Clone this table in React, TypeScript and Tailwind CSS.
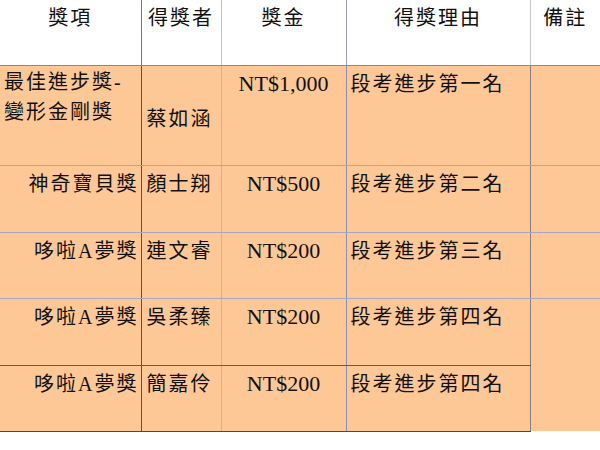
import React from "react";

const cjk = { fontFamily: '"Liberation Serif", "Noto Sans CJK TC", serif' };

type Row = {
  award: string;
  winner: string;
  prize: string;
  reason: string;
  h: string;
};

const rows: Row[] = [
  { award: "", winner: "蔡如涵", prize: "NT$1,000", reason: "段考進步第一名", h: "h-[100px]" },
  { award: "神奇寶貝獎", winner: "顏士翔", prize: "NT$500", reason: "段考進步第二名", h: "h-[67px]" },
  { award: "哆啦A夢獎", winner: "連文睿", prize: "NT$200", reason: "段考進步第三名", h: "h-[66px]" },
  { award: "哆啦A夢獎", winner: "吳柔臻", prize: "NT$200", reason: "段考進步第四名", h: "h-[67px]" },
  { award: "哆啦A夢獎", winner: "簡嘉伶", prize: "NT$200", reason: "段考進步第四名", h: "h-[66px]" },
];

export default function App() {
  const cell = "p-0 text-[20px] leading-[28px] tracking-[2px] text-[#111]";
  return (
    <div className="w-[600px] h-[450px] bg-white overflow-hidden" style={cjk}>
      <table className="table-fixed border-collapse w-[600px]">
        <colgroup>
          <col className="w-[141px]" />
          <col className="w-[80px]" />
          <col className="w-[125px]" />
          <col className="w-[184px]" />
          <col className="w-[70px]" />
        </colgroup>
        <thead>
          <tr className="h-[65px] bg-white">
            <th className={`${cell} align-top font-normal text-center pt-[4px] border-r border-r-[#777] border-b border-b-[#8a8a8a]`}>獎項</th>
            <th className={`${cell} align-top font-normal text-center pt-[4px] border-r border-r-[#c4c4c4] border-b border-b-[#8a8a8a]`}>得獎者</th>
            <th className={`${cell} align-top font-normal text-center pt-[4px] border-r border-r-[#9a9ab8] border-b border-b-[#8a8a8a]`}>獎金</th>
            <th className={`${cell} align-top font-normal text-center pt-[4px] border-r border-r-[#c8c8c8] border-b border-b-[#8a8a8a]`}>得獎理由</th>
            <th className={`${cell} align-top font-normal text-center pt-[4px] border-b border-b-[#8a8a8a]`}>備註</th>
          </tr>
        </thead>
        <tbody className="bg-[#fdc895]">
          {rows.map((r, i) => {
            const last = i === rows.length - 1;
            const bottom = last
              ? "border-b border-b-[#5a4636]"
              : i === 3
              ? "border-b border-b-[#6e5a48]"
              : "border-b border-b-[#a9a6c2]";
            return (
              <tr key={i} className={r.h}>
                <td
                  className={`${cell} align-top ${i === 0 ? "text-left pl-[4px] pt-[1px] leading-[30px]" : "text-right pr-[2px] pt-[4px]"} border-r border-r-[#5e5048] ${bottom}`}
                >
                  {i === 0 ? (
                    <>
                      <div>最佳進步獎-</div>
                      <div>變形金剛獎</div>
                    </>
                  ) : (
                    r.award
                  )}
                </td>
                <td
                  className={`${cell} ${i === 0 ? "align-middle pt-[8px]" : "align-top pt-[4px]"} pl-[5px] border-r border-r-[#c9b49c] ${bottom}`}
                >
                  {r.winner}
                </td>
                <td
                  className={`${cell} align-top text-center pt-[4px] text-[22px] tracking-normal border-r border-r-[#8e8eb0] ${bottom}`}
                >
                  {r.prize}
                </td>
                <td className={`${cell} align-top pl-[4px] pt-[4px] border-r border-r-[#8e7a78] ${bottom}`}>
                  {r.reason}
                </td>
                {i < 3 && (
                  <td className={`${cell} border-b border-b-[#a9a6c2]`}></td>
                )}
                {i === 3 && <td rowSpan={2} className={`${cell}`}></td>}
              </tr>
            );
          })}
        </tbody>
      </table>
    </div>
  );
}
